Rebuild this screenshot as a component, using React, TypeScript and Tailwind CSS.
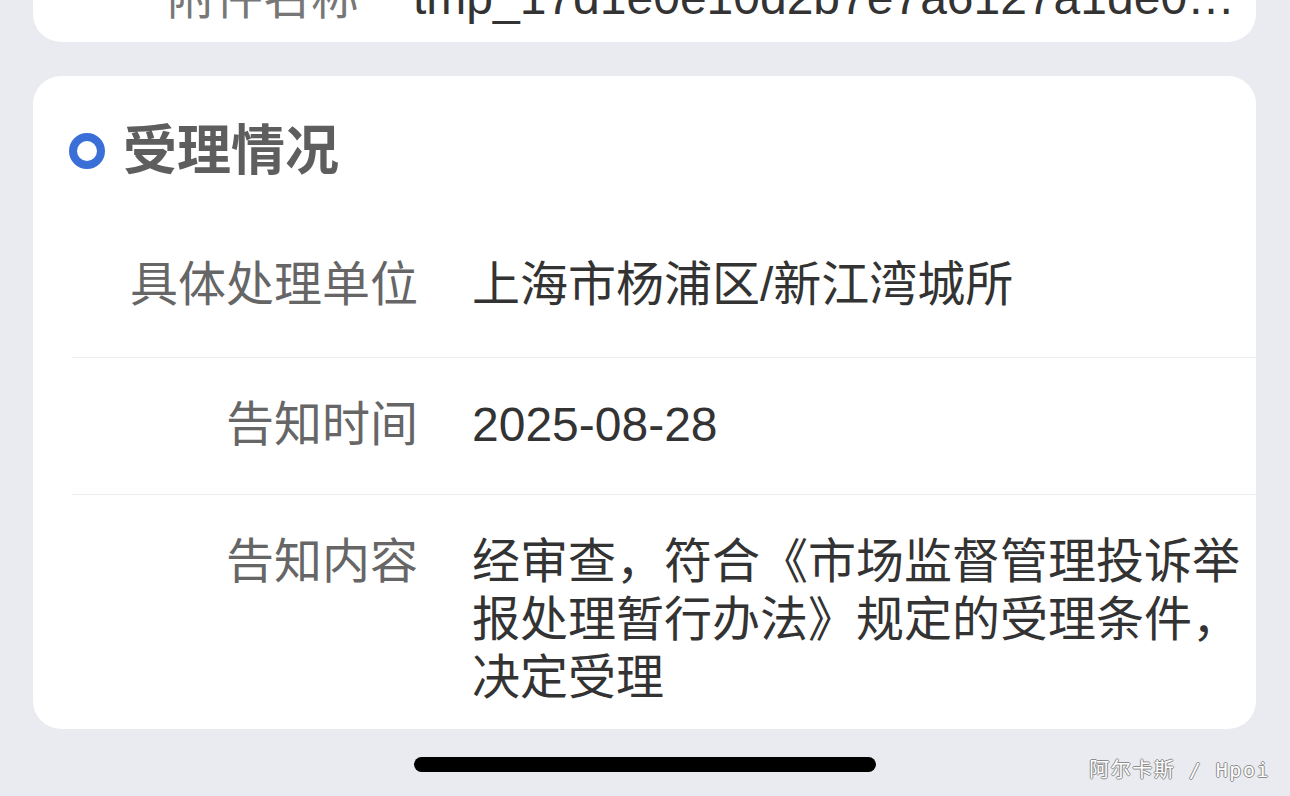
const cjk = { fontFamily: '"Liberation Sans", "Noto Sans CJK SC", sans-serif' };

type Row = { label: string; value: string; first?: boolean; last?: boolean };

const rows: Row[] = [
  { label: "具体处理单位", value: "上海市杨浦区/新江湾城所", first: true },
  { label: "告知时间", value: "2025-08-28" },
  {
    label: "告知内容",
    value: "经审查，符合《市场监督管理投诉举报处理暂行办法》规定的受理条件，决定受理",
    last: true,
  },
];

function InfoRow({ label, value, first, last }: Row) {
  return (
    <div
      className={`ml-[39px] flex text-[48px] leading-[58px] ${
        first ? "pt-[38px] pb-[43px]" : "pt-[38px] pb-[40px]"
      } ${last ? "" : "border-b border-[#ececec]"}`}
    >
      <div className="w-[346px] shrink-0 text-right text-[#666666]">{label}</div>
      <div className="ml-[54px] flex-1 pr-[6px] text-[#333333]">{value}</div>
    </div>
  );
}

export default function App() {
  return (
    <div className="relative flex h-[796px] w-[1290px] flex-col overflow-hidden bg-[#e9ebf0]" style={cjk}>
      {/* previous card, mostly scrolled away */}
      <div className="mx-[33px] h-[42px] w-[1223px] overflow-hidden rounded-b-[28px] bg-white">
        <div className="-mt-[31px] ml-[39px] flex text-[48px] leading-[58px]">
          <div className="w-[287px] shrink-0 text-right text-[#777777]">附件名称</div>
          <div className="ml-[54px] min-w-0 flex-1 truncate pr-[2px] text-[#333333]">
            tmp_17d1e0e10d2b7e7a6127a1de01b2c4f8e9.jpg
          </div>
        </div>
      </div>

      <div className="mx-[33px] mt-[34px] h-[653px] w-[1223px] rounded-[28px] bg-white">
        <div className="flex h-[142px] items-center pl-[36px] pt-[8px]">
          <div className="h-[36px] w-[36px] rounded-full border-[8px] border-[#3b6fd8] bg-white" />
          <div className="ml-[18px] text-[54px] font-bold leading-none text-[#5e5e5e]">受理情况</div>
        </div>
        {rows.map((r) => (
          <InfoRow key={r.label} {...r} />
        ))}
      </div>

      <div className="mx-auto mt-[28px] h-[15px] w-[462px] rounded-full bg-black" />

      {/* watermark */}
      <div
        className="absolute bottom-[16px] right-[20px] text-[20px] leading-none tracking-[1.5px] text-white [text-shadow:1px_0_#8c8c8c,-1px_0_#8c8c8c,0_1px_#8c8c8c,0_-1px_#8c8c8c]"
        style={{ fontFamily: '"DejaVu Sans Mono", "Noto Sans CJK SC", monospace' }}
      >
        阿尔卡斯 / Hpoi
      </div>
    </div>
  );
}
